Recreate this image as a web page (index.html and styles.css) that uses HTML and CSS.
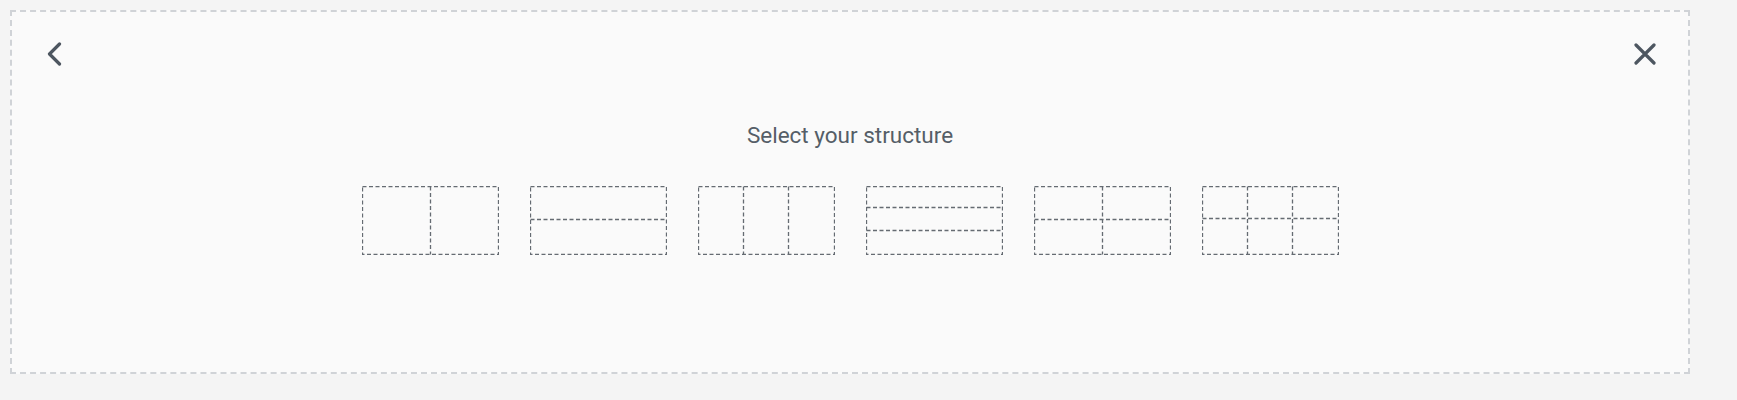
FILE: index.html
```html
<!DOCTYPE html>
<html lang="en">
<head>
    <meta charset="UTF-8">
    <meta name="viewport" content="width=device-width, initial-scale=1.0">
    <title>Select your structure</title>
    <link rel="stylesheet" href="styles.css">
</head>
<body>

    <div class="add-section">
        <div class="section-header">
            <button class="icon-btn back-btn" title="Back">
                <svg width="16" height="24" viewBox="0 0 16 24">
                    <path d="M13.5 2 L3.5 12 L13.5 22" fill="none" stroke="currentColor" stroke-width="3.2" stroke-linecap="round" stroke-linejoin="round"/>
                </svg>
            </button>
            <button class="icon-btn close-btn" title="Close">
                <svg width="22" height="22" viewBox="0 0 22 22">
                    <path d="M2 2 L20 20 M20 2 L2 20" fill="none" stroke="currentColor" stroke-width="3.2" stroke-linecap="round"/>
                </svg>
            </button>
        </div>

        <h2 class="preset-title">Select your structure</h2>

        <div class="preset-list">
            <!-- 2 columns -->
            <svg class="preset" width="137" height="69" viewBox="0 0 137 69">
                <rect x="0.5" y="0.5" width="136" height="68"/>
                <line x1="68.5" y1="0.5" x2="68.5" y2="68.5"/>
            </svg>
            <!-- 2 rows -->
            <svg class="preset" width="137" height="69" viewBox="0 0 137 69">
                <rect x="0.5" y="0.5" width="136" height="68"/>
                <line x1="0.5" y1="33.5" x2="136.5" y2="33.5"/>
            </svg>
            <!-- 3 columns -->
            <svg class="preset" width="137" height="69" viewBox="0 0 137 69">
                <rect x="0.5" y="0.5" width="136" height="68"/>
                <line x1="45.5" y1="0.5" x2="45.5" y2="68.5"/>
                <line x1="90.5" y1="0.5" x2="90.5" y2="68.5"/>
            </svg>
            <!-- 3 rows -->
            <svg class="preset" width="137" height="69" viewBox="0 0 137 69">
                <rect x="0.5" y="0.5" width="136" height="68"/>
                <line x1="0.5" y1="21.5" x2="136.5" y2="21.5"/>
                <line x1="0.5" y1="44.5" x2="136.5" y2="44.5"/>
            </svg>
            <!-- 2 x 2 -->
            <svg class="preset" width="137" height="69" viewBox="0 0 137 69">
                <rect x="0.5" y="0.5" width="136" height="68"/>
                <line x1="68.5" y1="0.5" x2="68.5" y2="68.5"/>
                <line x1="0.5" y1="33.5" x2="136.5" y2="33.5"/>
            </svg>
            <!-- 3 x 2 -->
            <svg class="preset" width="137" height="69" viewBox="0 0 137 69">
                <rect x="0.5" y="0.5" width="136" height="68"/>
                <line x1="45.5" y1="0.5" x2="45.5" y2="68.5"/>
                <line x1="90.5" y1="0.5" x2="90.5" y2="68.5"/>
                <line x1="0.5" y1="32.5" x2="136.5" y2="32.5"/>
            </svg>
        </div>
    </div>

</body>
</html>
```

FILE: styles.css
```css
body {
    margin: 0;
    padding: 10px;
    background-color: #f4f4f4;
    font-family: Roboto, Arial, sans-serif;
}
.add-section {
    width: 1680px;
    height: 364px;
    box-sizing: border-box;
    background: #fafafa;
    border: 2px dashed #d0d3d7;
}
.section-header {
    display: flex;
    justify-content: space-between;
    align-items: flex-start;
    padding: 30px 32px 0 34px;
}
.icon-btn {
    display: block;
    padding: 0;
    border: none;
    background: none;
    color: #4d5660;
    cursor: pointer;
}
.icon-btn svg {
    display: block;
}
.close-btn {
    margin-top: 1px;
}
.preset-title {
    margin: 56px 0 0;
    font-size: 22.5px;
    font-weight: normal;
    line-height: 26px;
    text-align: center;
    color: #555e67;
}
.preset-list {
    display: flex;
    justify-content: center;
    gap: 31px;
    margin-top: 38px;
}
.preset {
    display: block;
    cursor: pointer;
}
.preset rect,
.preset line {
    fill: none;
    stroke: #656b72;
    stroke-width: 1.3;
    stroke-dasharray: 4 2.5;
}
```
